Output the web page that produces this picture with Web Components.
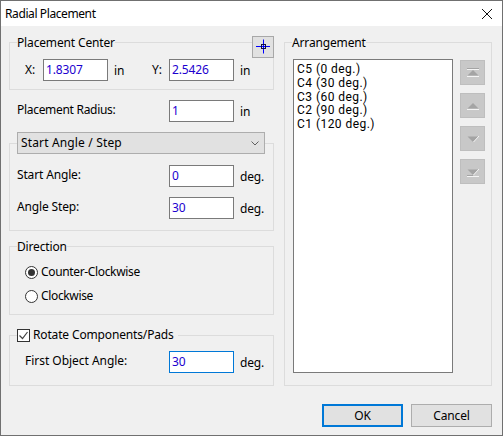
<!DOCTYPE html>
<html>
<head>
<meta charset="utf-8">
<title>Radial Placement</title>
<style>
  html, body { margin: 0; padding: 0; }
  body { font: 12px "Noto Sans", "Open Sans", sans-serif; color: #000; }
</style>
</head>
<body>
<rp-window title="Radial Placement">
  <rp-placement-left slot="left"></rp-placement-left>
  <rp-arrangement slot="right"></rp-arrangement>
  <rp-button slot="footer" default>OK</rp-button>
  <rp-button slot="footer">Cancel</rp-button>
</rp-window>

<script>
const FONT = `"Noto Sans", "Open Sans", sans-serif`;

class RpWindow extends HTMLElement {
  constructor() {
    super();
    this.attachShadow({ mode: "open" });
    this.shadowRoot.innerHTML = `
    <style>
      :host { display: flex; flex-direction: column; box-sizing: border-box; width: 503px; height: 436px;
        border: 1px solid #707070; background: #f0f0f0; font: 12px ${FONT}; letter-spacing: -0.15px; color: #000; overflow: hidden; }
      header { height: 25px; background: #fff; display: flex; align-items: center; justify-content: space-between;
        padding: 0 10px 0 4px; flex: none; }
      #title { letter-spacing: -0.4px; }
      main { display: flex; gap: 10px; padding: 8px 10px 0 8px; height: 352px; flex: none; }
      footer { display: flex; justify-content: flex-end; gap: 8px; padding: 18px 10px 0 0; }
      svg { display: block; }
    </style>
    <header><span id="title"></span>
      <svg width="10" height="10" viewBox="0 0 10 10"><path d="M0 0l10 10M10 0L0 10" stroke="#111" fill="none"/></svg>
    </header>
    <main><slot name="left"></slot><slot name="right"></slot></main>
    <footer><slot name="footer"></slot></footer>`;
    this.shadowRoot.getElementById("title").textContent = this.getAttribute("title");
  }
}
customElements.define("rp-window", RpWindow);

class RpGroup extends HTMLElement {
  constructor() {
    super();
    this.attachShadow({ mode: "open" });
    this.shadowRoot.innerHTML = `
    <style>
      :host { display: block; }
      fieldset { margin: 0; border: 1px solid #dcdcdc; padding: 0; min-width: 0; height: 100%; box-sizing: border-box; }
      legend { padding: 0; margin-left: 7px; height: var(--legend-h, 16px); line-height: 16px; box-sizing: border-box; }
      ::slotted(span) { display: block; height: 15px; padding-top: 1px; }
      .body { padding: var(--pad, 0); }
    </style>
    <fieldset><legend><slot name="legend"></slot></legend><div class="body"><slot></slot></div></fieldset>`;
  }
}
customElements.define("rp-group", RpGroup);

class RpInput extends HTMLElement {
  constructor() {
    super();
    this.attachShadow({ mode: "open" });
    this.shadowRoot.innerHTML = `
    <style>
      :host { display: block; box-sizing: border-box; width: 65px; height: 22px; background: #fff;
        border: 1px solid #7a7a7a; color: #1c00cf; line-height: 20px; padding-left: 2px; overflow: hidden; }
      :host([focused]) { border-color: #0078d7; }
    </style><slot></slot>`;
  }
}
customElements.define("rp-input", RpInput);

// label, input, unit on one row. input sits at a fixed column from the group edge
class RpField extends HTMLElement {
  constructor() {
    super();
    this.attachShadow({ mode: "open" });
    this.shadowRoot.innerHTML = `
    <style>
      :host { display: grid; grid-template-columns: var(--label-w, 152px) 65px auto; align-items: center; height: 22px; }
      .unit { padding-left: 6px; }
      .lab { padding-bottom: 3px; letter-spacing: var(--lab-ls, -0.15px); }
    </style>
    <span class="lab"></span><rp-input></rp-input><span class="unit"></span>`;
    const s = this.shadowRoot;
    s.querySelector(".lab").textContent = this.getAttribute("label");
    s.querySelector("rp-input").textContent = this.getAttribute("value");
    s.querySelector(".unit").textContent = this.getAttribute("unit");
    if (this.hasAttribute("focused")) s.querySelector("rp-input").setAttribute("focused", "");
  }
}
customElements.define("rp-field", RpField);

class RpCombo extends HTMLElement {
  constructor() {
    super();
    this.attachShadow({ mode: "open" });
    this.shadowRoot.innerHTML = `
    <style>
      :host { display: flex; align-items: center; justify-content: space-between; box-sizing: border-box;
        width: 248px; height: 22px; background: #e1e1e1; border: 1px solid #adadad; padding: 0 5px 0 3px; letter-spacing: 0.15px; }
      svg { display: block; }
    </style>
    <slot></slot>
    <svg width="8" height="5" viewBox="0 0 8 5"><path d="M.5.5L4 4 7.5.5" stroke="#606060" fill="none"/></svg>`;
  }
}
customElements.define("rp-combo", RpCombo);

class RpRadio extends HTMLElement {
  constructor() {
    super();
    this.attachShadow({ mode: "open" });
    this.shadowRoot.innerHTML = `
    <style>
      :host { display: flex; align-items: center; gap: 3px; height: 14px; letter-spacing: -0.35px; }
      span { padding-bottom: 2px; }
      svg { display: block; flex: none; }
      circle.dot { display: none; }
      :host([checked]) circle.dot { display: block; }
    </style>
    <svg width="13" height="13" viewBox="0 0 13 13">
      <circle cx="6.5" cy="6.5" r="6" fill="#fff" stroke="#333"/>
      <circle class="dot" cx="6.5" cy="6.5" r="3.5" fill="#333"/>
    </svg><span><slot></slot></span>`;
  }
}
customElements.define("rp-radio", RpRadio);

class RpCheck extends HTMLElement {
  constructor() {
    super();
    this.attachShadow({ mode: "open" });
    this.shadowRoot.innerHTML = `
    <style>
      :host { display: inline-flex; align-items: center; gap: 3px; padding-right: 4px; height: 16px; }
      svg { display: block; flex: none; }
    </style>
    <svg width="13" height="13" viewBox="0 0 13 13">
      <rect x=".5" y=".5" width="12" height="12" fill="#fff" stroke="#333"/>
      <path d="M2.5 6.5l3 3 5-6.5" fill="none" stroke="#444" stroke-width="1.2"/>
    </svg><slot></slot>`;
  }
}
customElements.define("rp-check", RpCheck);

class RpButton extends HTMLElement {
  constructor() {
    super();
    this.attachShadow({ mode: "open" });
    this.shadowRoot.innerHTML = `
    <style>
      :host { display: flex; align-items: center; justify-content: center; box-sizing: border-box;
        width: 81px; height: 23px; background: #e1e1e1; border: 1px solid #adadad; }
      :host([default]) { border: 2px solid #0078d7; }
    </style><slot></slot>`;
  }
}
customElements.define("rp-button", RpButton);

// small square tool button, the icon comes from the kind attribute
const GREY = "#a4a4a4", LIGHT = "#f4f4f4";
const ARROWS = {
  top: `<path d="M7 8.5h12" stroke="${GREY}"/><path d="M7 9.5h12" stroke="${LIGHT}"/>
        <path d="M13 10l5.5 5.5h-11z" fill="${GREY}"/><path d="M7 16.5h12" stroke="${LIGHT}"/>`,
  up: `<path d="M13 10l5.5 5.5h-11z" fill="${GREY}"/><path d="M7 16.5h12" stroke="${LIGHT}"/>`,
  down: `<path d="M7.5 10.5h11L13 16z" fill="${GREY}"/><path d="M13.5 16l5.5-6" stroke="${LIGHT}" fill="none"/>`,
  bottom: `<path d="M7.5 10.5h11L13 16z" fill="${GREY}"/><path d="M13.5 16l5.5-6" stroke="${LIGHT}" fill="none"/>
           <path d="M7 16.5h6" stroke="${GREY}"/><path d="M7 17.5h12" stroke="${LIGHT}"/>`,
};
class RpTool extends HTMLElement {
  constructor() {
    super();
    this.attachShadow({ mode: "open" });
    const k = this.getAttribute("kind");
    this.shadowRoot.innerHTML = `
    <style>
      :host { display: block; box-sizing: border-box; width: 25px; height: 25px; background: #c8c8c8; border: 1px solid #bebebe; }
      svg { display: block; margin: -1px; }
    </style>
    <svg width="25" height="25" viewBox="0 0 25 25">${ARROWS[k]}</svg>`;
  }
}
customElements.define("rp-tool", RpTool);

// rows are closer than the Noto line box, Roboto has a shorter one
class RpList extends HTMLElement {
  constructor() {
    super();
    this.attachShadow({ mode: "open" });
    this.shadowRoot.innerHTML = `
    <style>
      :host { display: block; box-sizing: border-box; width: 160px; height: 314px; background: #fff;
        border: 1px solid #7a7a7a; padding: 3px 3px 0; font-family: Roboto, sans-serif; letter-spacing: 0.45px; }
      ::slotted(div) { line-height: 13.75px; }
    </style><slot></slot>`;
  }
}
customElements.define("rp-list", RpList);

class RpPlacementLeft extends HTMLElement {
  constructor() {
    super();
    this.attachShadow({ mode: "open" });
    this.shadowRoot.innerHTML = `
    <style>
      :host { display: block; width: 265px; position: relative; }
      .center { height: 56px; margin-bottom: 10px; --pad: 9px 0 0 15px; }
      .xy { display: grid; grid-template-columns: 18px 65px 44px 17px 65px auto; align-items: center; height: 22px; }
      .xy .lab { padding-bottom: 2px; }
      .xy .u { padding-left: 6px; }
      .pick { position: absolute; left: 243px; top: 2px; width: 22px; height: 22px; box-sizing: border-box;
        background: #e1e1e1; border: 1px solid #a8a8a8; }
      .pick svg { display: block; margin: -1px; }
      .radius { margin-left: 8px; --lab-ls: -0.3px; }
      .mode { margin-top: 10px; height: 99px; --legend-h: 22px; --pad: 11px 0 0 7px; }
      .mode rp-field + rp-field { margin-top: 10px; }
      .direction { margin-top: 7px; height: 77px; --pad: 11px 0 0 15px; }
      .direction rp-radio + rp-radio { margin-top: 10px; }
      .rotate { margin-top: 12px; height: 59px; --pad: 8px 0 0 15px; --label-w: 144px; --lab-ls: -0.03px; }
    </style>
    <rp-group class="center">
      <span slot="legend">Placement Center</span>
      <div class="xy">
        <span class="lab">X:</span><rp-input>1.8307</rp-input><span class="u">in</span>
        <span class="lab">Y:</span><rp-input>2.5426</rp-input><span class="u">in</span>
      </div>
    </rp-group>
    <div class="pick"><svg width="22" height="22" viewBox="0 0 22 22">
      <path d="M11.5 3.5v14M4 10.5h14" stroke="#0000ff" fill="none"/>
      <rect x="9.5" y="8.5" width="4" height="4" stroke="#101040" fill="none"/>
    </svg></div>
    <rp-field class="radius" label="Placement Radius:" value="1" unit="in"></rp-field>
    <rp-group class="mode">
      <rp-combo slot="legend">Start Angle / Step</rp-combo>
      <rp-field label="Start Angle:" value="0" unit="deg."></rp-field>
      <rp-field label="Angle Step:" value="30" unit="deg."></rp-field>
    </rp-group>
    <rp-group class="direction">
      <span slot="legend">Direction</span>
      <rp-radio checked>Counter-Clockwise</rp-radio>
      <rp-radio>Clockwise</rp-radio>
    </rp-group>
    <rp-group class="rotate">
      <rp-check slot="legend">Rotate Components/Pads</rp-check>
      <rp-field label="First Object Angle:" value="30" unit="deg." focused></rp-field>
    </rp-group>`;
  }
}
customElements.define("rp-placement-left", RpPlacementLeft);

class RpArrangement extends HTMLElement {
  constructor() {
    super();
    this.attachShadow({ mode: "open" });
    this.shadowRoot.innerHTML = `
    <style>
      :host { display: block; width: 208px; height: 352px; }
      rp-group { height: 352px; --pad: 9px 0 0 8px; }
      .row { display: flex; gap: 7px; }
      .tools { display: flex; flex-direction: column; gap: 8px; padding-top: 1px; }
    </style>
    <rp-group>
      <span slot="legend">Arrangement</span>
      <div class="row">
        <rp-list>
          <div>C5 (0 deg.)</div>
          <div>C4 (30 deg.)</div>
          <div>C3 (60 deg.)</div>
          <div>C2 (90 deg.)</div>
          <div>C1 (120 deg.)</div>
        </rp-list>
        <div class="tools">
          <rp-tool kind="top"></rp-tool>
          <rp-tool kind="up"></rp-tool>
          <rp-tool kind="down"></rp-tool>
          <rp-tool kind="bottom"></rp-tool>
        </div>
      </div>
    </rp-group>`;
  }
}
customElements.define("rp-arrangement", RpArrangement);
</script>
</body>
</html>
